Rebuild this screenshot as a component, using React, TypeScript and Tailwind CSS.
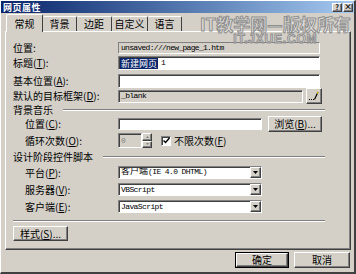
import React from 'react';

const cjk = "font-['Noto_Sans_CJK_SC','Liberation_Sans',sans-serif]";
const mono = "font-['Liberation_Mono','Noto_Sans_CJK_SC',monospace]";
const raised =
  'border border-t-white border-l-white border-r-[#404040] border-b-[#404040] shadow-[inset_-1px_-1px_0_#808080]';
const sunken =
  'border border-t-[#808080] border-l-[#808080] border-r-white border-b-white shadow-[inset_1px_1px_0_#404040]';

function Label({ text, k, indent }: { text: string; k?: string; indent?: boolean }) {
  return (
    <div className={`w-[105px] shrink-0 text-[10px] leading-none text-black ${indent ? 'pl-3' : ''}`}>
      {text}
      {k ? (
        <>
          (<span className="underline">{k}</span>):
        </>
      ) : (
        ':'
      )}
    </div>
  );
}

function Select({ value }: { value: React.ReactNode }) {
  return (
    <div className={`${sunken} bg-white w-[144px] h-[13px] flex items-center`}>
      <div className={`${mono} flex-1 pl-[2px] text-[8px] tracking-[-0.6px] leading-none text-black whitespace-nowrap overflow-hidden`}>
        {value}
      </div>
      <div className={`${raised} bg-[#d4d0c8] w-[11px] h-[11px] flex items-center justify-center`}>
        <svg width="5" height="3" viewBox="0 0 5 3">
          <path d="M0 0h5L2.5 3z" fill="#000" />
        </svg>
      </div>
    </div>
  );
}

function Group({ text }: { text: string }) {
  return (
    <div className="flex items-center h-[12px]">
      <span className="text-[10px] leading-none">{text}</span>
      <div className="ml-[10px] flex-1 border-t border-t-[#808080] border-b border-b-white" />
    </div>
  );
}

export default function App() {
  return (
    <div className={`${cjk} relative w-[356px] h-[274px] bg-[#d4d0c8] border-t border-l border-white border-r-2 border-r-[#404040] border-b-2 border-b-[#404040] flex flex-col overflow-hidden`}>
      {/* title bar */}
      <div className="h-[12px] bg-linear-to-r from-[#0a246a] to-[#a6caf0] flex items-center pl-[2px] pr-[1px]">
        <span className="text-white text-[9px] font-bold leading-none tracking-[0.5px]">网页属性</span>
        <div className="ml-auto flex gap-[1px]">
          <div className={`${raised} bg-[#d4d0c8] w-[10px] h-[9px] flex items-center justify-center text-[7px] font-bold leading-none`}>?</div>
          <div className={`${raised} bg-[#d4d0c8] w-[10px] h-[9px] flex items-center justify-center text-[8px] font-bold leading-none`}>×</div>
        </div>
      </div>

      {/* tabs */}
      <div className="mt-[1px] h-[17px] flex items-end pl-[5px]">
        <div className="relative z-10 -mb-px h-[18px] w-[37px] bg-[#d4d0c8] border-t border-l border-white border-r border-r-[#404040] rounded-t-[2px] flex items-center justify-center text-[10px] leading-none">
          常规
        </div>
        {['背景', '边距', '自定义', '语言'].map((t, i) => (
          <div
            key={t}
            className={`h-[15px] ${i === 1 ? 'w-[35px]' : i === 2 ? 'w-[36px]' : 'w-[34px]'} border-t border-t-white border-r border-r-[#404040] rounded-t-[2px] flex items-center justify-center text-[10px] leading-none`}
          >
            {t}
          </div>
        ))}
      </div>

      {/* panel */}
      <div className="ml-[4px] mr-[3px] h-[219px] border border-t-white border-l-white border-r-[#404040] border-b-[#404040] shadow-[inset_-1px_-1px_0_#808080] pl-[7px] pr-[25px] pt-[10px] flex flex-col">
        <div className="flex items-center h-[12px]">
          <Label text="位置" />
          <div className="w-[202px] h-[12px] border-t border-l border-t-[#808080] border-l-[#808080] border-b border-r border-b-white border-r-white flex items-center pl-[2px]">
            <span className={`${mono} text-[8px] tracking-[-0.7px] leading-none`}>unsaved:///new_page_1.htm</span>
          </div>
        </div>

        <div className="flex items-center h-[14px] mt-[2px]">
          <Label text="标题" k="T" />
          <div className={`${sunken} bg-white w-[202px] h-[14px] flex items-center pl-[1px]`}>
            <span className="bg-[#0a246a] text-white text-[9px] leading-[11px] px-[1px]">新建网页</span>
            <span className={`${mono} text-[8px] leading-none ml-[3px]`}>1</span>
          </div>
        </div>

        <div className="flex items-center h-[14px] mt-[4px]">
          <Label text="基本位置" k="A" />
          <div className={`${sunken} bg-white w-[202px] h-[14px]`} />
        </div>

        <div className="flex items-center h-[16px]">
          <Label text="默认的目标框架" k="D" />
          <div className={`${sunken} bg-[#d4d0c8] w-[185px] h-[13px] flex items-center pl-[2px]`}>
            <span className={`${mono} text-[8px] tracking-[-0.6px] leading-none`}>_blank</span>
          </div>
          <div className={`${raised} bg-[#d4d0c8] ml-[3px] w-[16px] h-[16px] flex items-center justify-center`}>
            <svg width="10" height="10" viewBox="0 0 10 10">
              <rect x="0" y="8" width="1" height="1" fill="#000" />
              <rect x="2" y="8" width="1" height="1" fill="#000" />
              <rect x="4" y="8" width="1" height="1" fill="#000" />
              <path d="M5.5 8.5L9 1" stroke="#000" strokeWidth="1.2" />
              <path d="M8.2 2.6L9 1" stroke="#e0c000" strokeWidth="1.4" />
            </svg>
          </div>
        </div>

        <Group text="背景音乐" />

        <div className="flex items-center h-[16px]">
          <Label text="位置" k="C" indent />
          <div className={`${sunken} bg-white w-[144px] h-[12px]`} />
          <div className={`${raised} bg-[#d4d0c8] ml-[6px] w-[54px] h-[16px] flex items-center justify-center text-[10px] leading-none`}>
            浏览(<span className="underline">B</span>)...
          </div>
        </div>

        <div className="flex items-center h-[15px] mt-[1px]">
          <Label text="循环次数" k="O" indent />
          <div className={`${sunken} bg-[#d4d0c8] w-[24px] h-[15px] flex items-center pl-[2px]`}>
            <span className={`${mono} text-[8px] leading-none text-[#808080]`}>0</span>
          </div>
          <div className="flex flex-col w-[10px] h-[15px]">
            <div className={`${raised} bg-[#d4d0c8] flex-1 flex items-center justify-center`}>
              <svg width="3" height="2" viewBox="0 0 3 2"><path d="M0 2h3L1.5 0z" fill="#808080" /></svg>
            </div>
            <div className={`${raised} bg-[#d4d0c8] flex-1 flex items-center justify-center`}>
              <svg width="3" height="2" viewBox="0 0 3 2"><path d="M0 0h3L1.5 2z" fill="#808080" /></svg>
            </div>
          </div>
          <div className={`${sunken} bg-white ml-[9px] w-[10px] h-[10px] flex items-center justify-center`}>
            <svg width="7" height="7" viewBox="0 0 7 7">
              <path d="M0.5 3.5L2.5 5.5L6.5 1" stroke="#000" strokeWidth="1.5" fill="none" />
            </svg>
          </div>
          <span className="ml-[3px] text-[10px] leading-none">
            不限次数(<span className="underline">F</span>)
          </span>
        </div>

        <div className="mt-[3px]">
          <Group text="设计阶段控件脚本" />
        </div>

        <div className="flex items-center h-[13px] mt-[3px]">
          <Label text="平台" k="P" indent />
          <Select
            value={
              <>
                <span className="text-[9px] tracking-normal">客户端</span>(IE 4.0 DHTML)
              </>
            }
          />
        </div>

        <div className="flex items-center h-[13px] mt-[4px]">
          <Label text="服务器" k="V" indent />
          <Select value="VBScript" />
        </div>

        <div className="flex items-center h-[13px] mt-[4px]">
          <Label text="客户端" k="E" indent />
          <Select value="JavaScript" />
        </div>

        <div className="mt-[7px] border-t border-t-[#808080] border-b border-b-white" />

        <div className="mt-[4px] flex">
          <div className={`${raised} bg-[#d4d0c8] w-[55px] h-[15px] flex items-center justify-center text-[10px] leading-none`}>
            样式(<span className="underline">S</span>)...
          </div>
        </div>
      </div>

      {/* bottom buttons */}
      <div className="mt-[2px] flex justify-end gap-[5px] pr-[4px]">
        <div className="border border-black">
          <div className={`${raised} bg-[#d4d0c8] w-[52px] h-[14px] flex items-center justify-center text-[10px] leading-none`}>
            确定
          </div>
        </div>
        <div className={`${raised} bg-[#d4d0c8] w-[56px] h-[16px] flex items-center justify-center text-[10px] leading-none`}>
          取消
        </div>
      </div>

      {/* watermark */}
      <div className="absolute left-[199px] top-[14px] pointer-events-none flex flex-col items-center">
        <span className="text-[17px] leading-[17px] font-bold text-[#ecebe8]/70 [-webkit-text-stroke:1px_#8f8f8f] whitespace-nowrap">
          IT教学网—版权所有
        </span>
        <span className="mt-[1px] text-[12px] leading-[12px] font-bold tracking-[0.8px] font-['Liberation_Sans',sans-serif] text-[#ecebe8]/70 [-webkit-text-stroke:1px_#8f8f8f] whitespace-nowrap">
          IT.JXUE.COM
        </span>
      </div>
    </div>
  );
}
